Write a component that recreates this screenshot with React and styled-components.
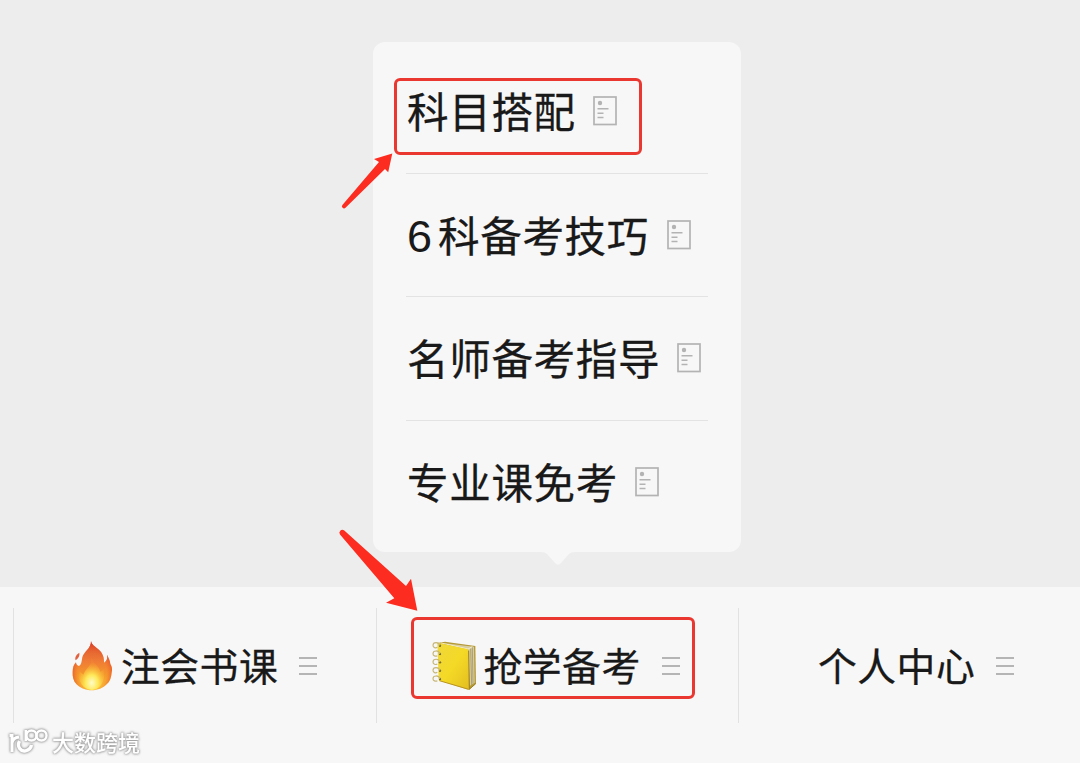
import React from "react";
import styled, { createGlobalStyle } from "styled-components";

const GlobalStyle = createGlobalStyle`
  * {
    box-sizing: border-box;
  }
  body {
    margin: 0;
    background: #ededed;
    font-family: "Noto Sans CJK SC", sans-serif;
    color: #191919;
  }
`;

const Page = styled.div`
  position: relative;
  display: flex;
  flex-direction: column;
  width: 1080px;
  height: 763px;
  overflow: hidden;
`;

const Stage = styled.div`
  height: 587px;
  padding: 42px 0 0 373px;
  background: #ededed;
`;

const Popup = styled.div`
  position: relative;
  width: 368px;
  height: 510px;
  padding: 8px 33px;
  border-radius: 12px;
  background: #f7f7f7;
`;

const PopupTail = styled.svg`
  position: absolute;
  top: 509px;
  left: 168px;
`;

const MenuRow = styled.div`
  display: flex;
  align-items: center;
  height: 123.5px;
  border-bottom: ${(props) => (props.$last ? "none" : "1px solid #e3e3e3")};
`;

const MenuLabel = styled.span`
  padding: 0 0 2px 1px;
  margin-right: ${(props) => props.$gap || "17px"};
  font-size: 41.5px;
  line-height: 60px;
  letter-spacing: 0.7px;
  white-space: nowrap;
  -webkit-text-stroke: 0.3px #191919;
`;

const Digit = styled.span`
  display: inline-block;
  width: 31px;
  font-family: "Liberation Sans", sans-serif;
  font-size: 45px;
  line-height: 50px;
  letter-spacing: 0;
  -webkit-text-stroke: 0;
`;

const Bar = styled.div`
  display: flex;
  height: 176px;
  padding: 21px 0 0 13px;
  background: #f7f7f7;
`;

const Tab = styled.div`
  display: flex;
  flex: 0 0 362.5px;
  align-items: center;
  height: 115px;
  padding-left: ${(props) => props.$indent};
  border-left: 1px solid #e2e2e2;
`;

const TabLabel = styled.span`
  margin-right: 21px;
  padding-bottom: 4px;
  font-size: 38.8px;
  line-height: 56px;
  letter-spacing: 0.5px;
  white-space: nowrap;
  -webkit-text-stroke: 0.3px #191919;
`;

const TabEmoji = styled.svg`
  flex: none;
  margin-right: 6px;
`;

const Lines = styled.span`
  width: 18px;
  height: 18px;
  border-top: 2px solid #b5b5b5;
  border-bottom: 2px solid #b5b5b5;
  &::after {
    content: "";
    display: block;
    height: 2px;
    margin-top: 6px;
    background: #b5b5b5;
  }
`;

const Highlight = styled.div`
  position: absolute;
  top: ${(props) => props.$top};
  left: ${(props) => props.$left};
  width: ${(props) => props.$width};
  height: ${(props) => props.$height};
  border: 3px solid #ea3830;
  border-radius: 6px;
`;

const Arrows = styled.svg`
  position: absolute;
  top: 145px;
  left: 330px;
`;

const Watermark = styled.div`
  position: absolute;
  top: 724px;
  left: 7px;
  display: flex;
  align-items: center;
  gap: 3px;
  filter: drop-shadow(0 0 1px #999) drop-shadow(0 0 1px #aaa);
`;

const WatermarkText = styled.span`
  padding-bottom: 1px;
  font-size: 22px;
  line-height: 30px;
  font-weight: 500;
  color: #fff;
`;

const ArticleIcon = () => (
  <svg width="24" height="30" viewBox="0 0 24 30" fill="none" stroke="#b3b3b3">
    <rect x="1" y="1" width="22" height="27.5" strokeWidth="1.7" />
    <circle cx="7" cy="7" r="2.2" fill="#b3b3b3" stroke="none" />
    <path d="M4.5 12.8h11M4.5 17.2h6M4.5 21.4h6" strokeWidth="1.5" />
  </svg>
);

const firePath =
  "M93 20C95 31 105 36 115 45C129 57 133 71 132 85C141 79 143 70 141 61C147 73 150 79 151 89C155 95 158 104 155 114C154 130 149 143 140 150C130 161 112 168 96 168C76 168 59 160 49 149C41 141 37 127 38 113C38 99 42 90 48 84C48 90 52 94 57 95C65 91 65 79 67 69C71 52 94 42 93 20Z";

const Fire = () => (
  <TabEmoji width="45" height="54" viewBox="30 14 135 162">
    <defs>
      <linearGradient id="flame" x1="0" y1="0" x2="0" y2="1">
        <stop offset="0" stopColor="#d9532f" />
        <stop offset="0.4" stopColor="#ef7a35" />
        <stop offset="0.7" stopColor="#f59a2c" />
        <stop offset="1" stopColor="#fbc43c" />
      </linearGradient>
      <radialGradient id="edge" cx="0.5" cy="0.62" r="0.55">
        <stop offset="0.65" stopColor="#f4632a" stopOpacity="0" />
        <stop offset="1" stopColor="#dd3f27" stopOpacity="0.8" />
      </radialGradient>
      <radialGradient id="core" cx="0.5" cy="0.78" r="0.62">
        <stop offset="0" stopColor="#fffcc8" />
        <stop offset="0.4" stopColor="#ffe95a" />
        <stop offset="1" stopColor="#fbb62d" stopOpacity="0.1" />
      </radialGradient>
    </defs>
    <path d={firePath} fill="url(#flame)" />
    <path d={firePath} fill="url(#edge)" />
    <path d="M58 55C60 64 55 72 47 78C43 69 49 61 58 55Z" fill="#e2603e" />
    <path
      d="M95 70C99 87 119 95 121 112C127 110 129 105 130 101C140 130 125 166 96 167C68 166 52 140 59 111C64 115 67 120 70 121C76 102 96 94 95 70Z"
      fill="url(#core)"
    />
  </TabEmoji>
);

const Notebook = () => (
  <TabEmoji width="47" height="52" viewBox="18 20 141 156">
    <defs>
      <linearGradient id="cover" x1="0" y1="0" x2="1" y2="1">
        <stop offset="0" stopColor="#f0d83a" />
        <stop offset="0.5" stopColor="#f4d926" />
        <stop offset="1" stopColor="#e3bd20" />
      </linearGradient>
    </defs>
    <path d="M37 29L60 25L151 38L153 151L134 167Z" fill="#b59a35" />
    <path d="M52 29L147 40L149 148L134 158L130 50Z" fill="#d8cda0" />
    <path d="M142 42L144 151M137 46L140 155" stroke="#998957" strokeWidth="2" />
    <path d="M48 29L129 47L142 40" fill="none" stroke="#f4edc9" strokeWidth="3" />
    <path
      d="M37 30Q38 28 42 29L126 47Q131 48 131 53L134 166Q134 170 130 169L46 143Q41 141 41 137Z"
      fill="url(#cover)"
    />
    <path d="M131 52L133 168L152 151" fill="none" stroke="#9b7e21" strokeWidth="3" />
    <path d="M43 142L131 168" stroke="#b89423" strokeWidth="3" />
    {[37, 62, 87, 112, 137].map((y) => (
      <g key={y}>
        <circle cx="45" cy={y} r="3.5" fill="#6c6023" />
        <path
          d={`M45 ${y}C41 ${y - 13} 24 ${y - 11} 24 ${y - 1}C24 ${y + 6} 32 ${y + 8} 37 ${y + 5}`}
          fill="none"
          stroke="#c7b778"
          strokeWidth="3.5"
        />
      </g>
    ))}
  </TabEmoji>
);

const WatermarkLogo = () => (
  <svg width="42" height="34" viewBox="0 0 42 34" fill="none" stroke="#fff">
    <path d="M2.5 11.5H5V28M5 19C5.5 15.5 8 13.5 12 13" strokeWidth="3" />
    <path d="M12.5 17C9.5 23 14 28 18.5 26.8C22 26 24 24 24.5 21" strokeWidth="3.4" />
    <path d="M18.8 6V17" strokeWidth="2.6" />
    <circle cx="24.5" cy="11.5" r="5" strokeWidth="2.4" />
    <circle cx="34.5" cy="11.5" r="5" strokeWidth="2.4" />
  </svg>
);

const App = () => {
  return (
    <Page>
      <GlobalStyle />
      <Stage>
        <Popup>
          <MenuRow>
            <MenuLabel>科目搭配</MenuLabel>
            <ArticleIcon />
          </MenuRow>
          <MenuRow>
            <MenuLabel $gap="18px">
              <Digit>6</Digit>科备考技巧
            </MenuLabel>
            <ArticleIcon />
          </MenuRow>
          <MenuRow>
            <MenuLabel>名师备考指导</MenuLabel>
            <ArticleIcon />
          </MenuRow>
          <MenuRow $last>
            <MenuLabel>专业课免考</MenuLabel>
            <ArticleIcon />
          </MenuRow>
          <PopupTail width="34" height="16" viewBox="0 0 34 16">
            <path d="M0 0H34V1Q30 1 28 3L20 12Q17 15.5 14 12L6 3Q4 1 0 1Z" fill="#f7f7f7" />
          </PopupTail>
        </Popup>
      </Stage>
      <Bar>
        <Tab $indent="56px">
          <Fire />
          <TabLabel>注会书课</TabLabel>
          <Lines />
        </Tab>
        <Tab $indent="54px">
          <Notebook />
          <TabLabel>抢学备考</TabLabel>
          <Lines />
        </Tab>
        <Tab $indent="79px">
          <TabLabel>个人中心</TabLabel>
          <Lines />
        </Tab>
      </Bar>
      <Highlight $top="78px" $left="394px" $width="248px" $height="77px" />
      <Highlight $top="617px" $left="411px" $width="284px" $height="82px" />
      <Arrows width="100" height="470" viewBox="0 0 100 470" fill="#fc2d20">
        <path d="M62.3 8.5L44 14L49 17L12.6 59.8A2 2 0 0 0 15.5 62.8L55 24L58.2 27.2Z" />
        <path d="M14 385.2A3 3 0 0 0 10 389.5L64.3 453.3L56 457.8L87.3 465.7L81 433.7L76 441Z" />
      </Arrows>
      <Watermark>
        <WatermarkLogo />
        <WatermarkText>大数跨境</WatermarkText>
      </Watermark>
    </Page>
  );
};

export default App;
